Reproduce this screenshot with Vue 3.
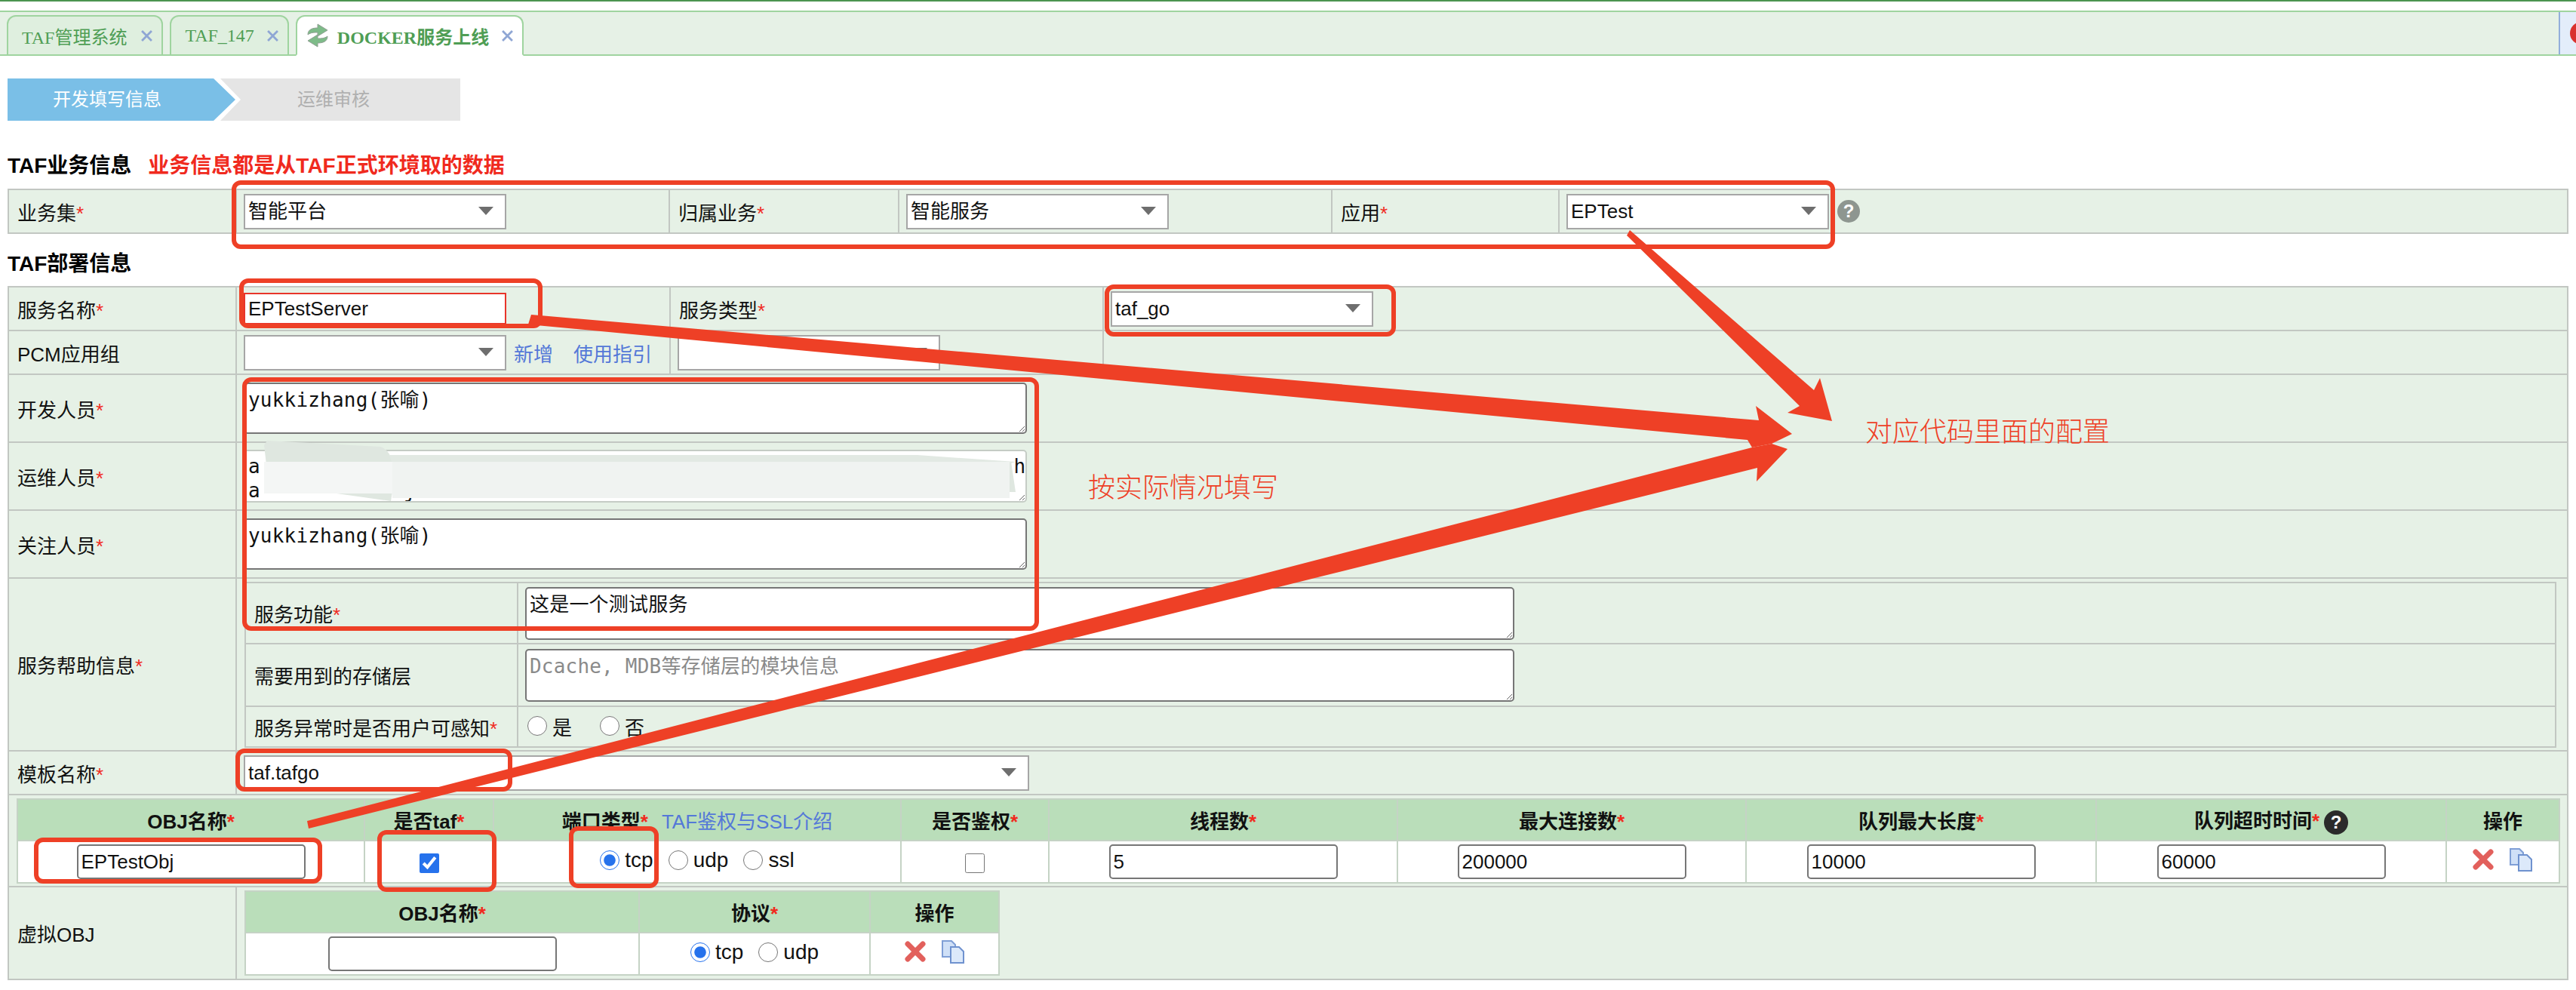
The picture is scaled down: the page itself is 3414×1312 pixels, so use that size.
<template>
  <div class="page">
    <div class="top-line"></div>

    <div class="tab-bar">
      <div v-for="tab in tabs" :key="tab.name" class="tab" :class="{ active: tab.active }">
        <svg v-if="tab.active" class="tab-icon" viewBox="0 0 30 32">
          <path d="M2 15C2 8 8 6 15 6V1l13 8-13 8v-5c-5 0-9 0-13 3z" fill="#7dbb88" stroke="#909f93" stroke-width="1" />
          <path d="M28 17c0 7-6 9-13 9v5L2 23l13-8v5c5 0 9 0 13-3z" fill="#7dbb88" stroke="#909f93" stroke-width="1" />
        </svg>
        <span class="tab-name">{{ tab.name }}</span>
        <svg class="tab-close" viewBox="0 0 14 14">
          <path d="M1 1l12 12M13 1L1 13" stroke="#8fa6d4" stroke-width="2.6" fill="none" />
        </svg>
      </div>
      <div class="tab-tools"><span class="tool-dot"></span></div>
    </div>

    <div class="steps">
      <div class="step step-on">开发填写信息</div>
      <div class="step step-off">运维审核</div>
    </div>

    <h3 class="section-title first">TAF业务信息<span class="section-note">业务信息都是从TAF正式环境取的数据</span></h3>
    <table class="form-table biz-table">
      <colgroup>
        <col style="width: 302px" />
        <col style="width: 574px" />
        <col style="width: 304px" />
        <col style="width: 574px" />
        <col style="width: 301px" />
        <col />
      </colgroup>
      <tr>
        <td class="label">业务集<i>*</i></td>
        <td><div class="select">智能平台</div></td>
        <td class="label">归属业务<i>*</i></td>
        <td><div class="select">智能服务</div></td>
        <td class="label">应用<i>*</i></td>
        <td class="app-cell">
          <div class="select">EPTest</div>
          <span class="hint gray">?</span>
        </td>
      </tr>
    </table>

    <h3 class="section-title">TAF部署信息</h3>
    <table class="form-table deploy-table">
      <colgroup>
        <col style="width: 302px" />
        <col style="width: 575px" />
        <col style="width: 574px" />
        <col />
      </colgroup>
      <tr class="row-58">
        <td class="label">服务名称<i>*</i></td>
        <td><input class="text-input server-name" value="EPTestServer" /></td>
        <td class="label">服务类型<i>*</i></td>
        <td><div class="select">taf_go</div></td>
      </tr>
      <tr class="row-58">
        <td class="label">PCM应用组</td>
        <td class="pcm-cell">
          <div class="select"></div>
          <a class="link">新增</a>
          <a class="link">使用指引</a>
        </td>
        <td><div class="select"></div></td>
        <td></td>
      </tr>
      <tr class="row-90">
        <td class="label">开发人员<i>*</i></td>
        <td colspan="3"><textarea class="area wide" :value="people"></textarea></td>
      </tr>
      <tr class="row-90">
        <td class="label">运维人员<i>*</i></td>
        <td colspan="3"><textarea class="area wide masked" :value="opsPeople"></textarea></td>
      </tr>
      <tr class="row-90">
        <td class="label">关注人员<i>*</i></td>
        <td colspan="3"><textarea class="area wide" :value="people"></textarea></td>
      </tr>
      <tr>
        <td class="label">服务帮助信息<i>*</i></td>
        <td colspan="3" class="nested-cell">
          <table class="form-table help-table">
            <colgroup>
              <col style="width: 361px" />
              <col />
            </colgroup>
            <tr class="row-81">
              <td class="label">服务功能<i>*</i></td>
              <td><textarea class="area help-area" value="这是一个测试服务"></textarea></td>
            </tr>
            <tr class="row-83">
              <td class="label">需要用到的存储层</td>
              <td><textarea class="area help-area" placeholder="Dcache, MDB等存储层的模块信息"></textarea></td>
            </tr>
            <tr class="row-54">
              <td class="label">服务异常时是否用户可感知<i>*</i></td>
              <td class="radios">
                <label><input type="radio" name="aware" />是</label>
                <label><input type="radio" name="aware" />否</label>
              </td>
            </tr>
          </table>
        </td>
      </tr>
      <tr class="row-58">
        <td class="label">模板名称<i>*</i></td>
        <td colspan="3"><div class="select template">taf.tafgo</div></td>
      </tr>
      <tr>
        <td colspan="4" class="obj-cell">
          <table class="grid-table obj-table">
            <colgroup>
              <col v-for="col in objCols" :key="col.title" :style="{ width: col.width + 'px' }" />
            </colgroup>
            <tr class="grid-head">
              <th>OBJ名称<i>*</i></th>
              <th>是否taf<i>*</i></th>
              <th>端口类型<i>*</i><a class="link intro">TAF鉴权与SSL介绍</a></th>
              <th>是否鉴权<i>*</i></th>
              <th>线程数<i>*</i></th>
              <th>最大连接数<i>*</i></th>
              <th>队列最大长度<i>*</i></th>
              <th>队列超时时间<i>*</i><span class="hint dark">?</span></th>
              <th>操作</th>
            </tr>
            <tr class="grid-body">
              <td><input class="text-input small" value="EPTestObj" /></td>
              <td><input type="checkbox" class="check" checked /></td>
              <td class="proto">
                <label><input type="radio" name="proto" checked />tcp</label>
                <label><input type="radio" name="proto" />udp</label>
                <label><input type="radio" name="proto" />ssl</label>
              </td>
              <td><input type="checkbox" class="check" /></td>
              <td><input class="text-input small" value="5" /></td>
              <td><input class="text-input small" value="200000" /></td>
              <td><input class="text-input small" value="10000" /></td>
              <td><input class="text-input small" value="60000" /></td>
              <td class="ops">
                <svg class="op-del" viewBox="0 0 28 28"><path d="M4 4l20 20M24 4L4 24" stroke="#e2605c" stroke-width="7" stroke-linecap="round" /></svg>
                <svg class="op-copy" viewBox="0 0 32 32">
                  <path d="M2 2h12l5 5v16H2z" fill="#cfe0f7" stroke="#7f9fd6" stroke-width="2" />
                  <path d="M13 10h11l6 6v15H13z" fill="#dce9fa" stroke="#6f92cf" stroke-width="2" />
                </svg>
              </td>
            </tr>
          </table>
        </td>
      </tr>
      <tr>
        <td class="label">虚拟OBJ</td>
        <td colspan="3" class="virtual-cell">
          <table class="grid-table virtual-table">
            <colgroup>
              <col style="width: 522px" />
              <col style="width: 306px" />
              <col style="width: 171px" />
            </colgroup>
            <tr class="grid-head">
              <th>OBJ名称<i>*</i></th>
              <th>协议<i>*</i></th>
              <th>操作</th>
            </tr>
            <tr class="grid-body">
              <td><input class="text-input small" /></td>
              <td class="proto">
                <label><input type="radio" name="vproto" checked />tcp</label>
                <label><input type="radio" name="vproto" />udp</label>
              </td>
              <td class="ops">
                <svg class="op-del" viewBox="0 0 28 28"><path d="M4 4l20 20M24 4L4 24" stroke="#e2605c" stroke-width="7" stroke-linecap="round" /></svg>
                <svg class="op-copy" viewBox="0 0 32 32">
                  <path d="M2 2h12l5 5v16H2z" fill="#cfe0f7" stroke="#7f9fd6" stroke-width="2" />
                  <path d="M13 10h11l6 6v15H13z" fill="#dce9fa" stroke="#6f92cf" stroke-width="2" />
                </svg>
              </td>
            </tr>
          </table>
        </td>
      </tr>
    </table>

    <!-- annotations drawn on top of the screenshot -->
    <svg class="marks" viewBox="0 0 3414 1312">
      <path d="M350 590l4-6 150 8q12 4 16 20h820l6 40H520l-2 12-100-14-62-8z" fill="#dfe7e0" />
      <path d="M516 603h700l130 9-6 2H520z" fill="#e2e9e3" />
      <path d="M520 612h818v48H520z" fill="#f0f3f1" />
      <path d="M350 612h170v42H350z" fill="#f4f6f5" />

      <polygon points="2160,305 2404,517 2412,501 2428,558 2369,547 2385,538 2156,312" class="arrow" />
      <polygon points="704,417 2331,557 2327,538 2375,575 2348,588 2322,593 2316,583 700,430" class="arrow" />
      <polygon points="407,1088 2322,593 2348,588 2369,595 2328,638 2329,620 409,1098" class="arrow" />

      <rect v-for="box in boxes" :key="box.x" :x="box.x" :y="box.y" :width="box.w" :height="box.h" rx="9" class="box" />
    </svg>
    <div class="note note-fill">按实际情况填写</div>
    <div class="note note-code">对应代码里面的配置</div>
  </div>
</template>

<script setup>
const tabs = [
  { name: 'TAF管理系统' },
  { name: 'TAF_147' },
  { name: 'DOCKER服务上线', active: true }
]

const people = 'yukkizhang(张喻)'
const opsPeople = 'a' + ' '.repeat(63) + 'h\na' + ' '.repeat(11) + '_j'

const objCols = [
  { title: 'obj', width: 460 },
  { title: 'taf', width: 171 },
  { title: 'port', width: 540 },
  { title: 'auth', width: 196 },
  { title: 'thread', width: 462 },
  { title: 'conn', width: 462 },
  { title: 'queue', width: 464 },
  { title: 'timeout', width: 464 },
  { title: 'ops', width: 150 }
]

// red marker boxes
const boxes = [
  { x: 310, y: 242, w: 2119, h: 85 },
  { x: 320, y: 372, w: 396, h: 60 },
  { x: 1467, y: 380, w: 380, h: 63 },
  { x: 324, y: 503, w: 1050, h: 330 },
  { x: 315, y: 995, w: 361, h: 51 },
  { x: 48, y: 1113, w: 376, h: 55 },
  { x: 503, y: 1103, w: 152, h: 76 },
  { x: 757, y: 1098, w: 113, h: 76 }
]
</script>

<style>
html,
body {
  margin: 0;
  background: #fff;
}
</style>

<style scoped>
.page {
  position: relative;
  width: 3414px;
  height: 1312px;
  overflow: hidden;
  background: #fff;
  color: #111;
  font-family: "Liberation Sans", "Noto Sans CJK SC", sans-serif;
  font-size: 26px;
}

.top-line {
  height: 2px;
  margin-bottom: 12px;
  background: #4b9450;
}

.tab-bar {
  display: flex;
  align-items: flex-end;
  gap: 9px;
  box-sizing: border-box;
  height: 60px;
  padding-left: 9px;
  border-top: 2px solid #9fd49f;
  border-bottom: 2px solid #9fd49f;
  background: #e6f1e6;
}
.tab {
  display: flex;
  align-items: center;
  box-sizing: border-box;
  height: 54px;
  margin-bottom: -2px;
  padding: 0 12px 0 18px;
  border: 2px solid #9fd49f;
  border-radius: 12px 12px 0 0;
  background: #dfefdf;
  color: #4f9e55;
  font-family: "Liberation Serif", "Noto Sans CJK SC", serif;
  font-size: 24px;
}
.tab.active {
  padding: 0 12px 0 12px;
  border-bottom-color: #fff;
  background: #fff;
}
.tab.active .tab-name {
  font-weight: 700;
}
.tab-icon {
  width: 30px;
  height: 32px;
  margin-right: 11px;
}
.tab-close {
  width: 15px;
  height: 15px;
  margin-left: 17px;
}
.tab:first-child .tab-close {
  margin-left: 19px;
}
.tab-tools {
  display: flex;
  align-items: center;
  box-sizing: border-box;
  width: 23px;
  height: 56px;
  margin-left: auto;
  overflow: hidden;
  border-left: 2px solid #93aedb;
  background: #e3edfa;
}
.tool-dot {
  flex: none;
  width: 30px;
  height: 30px;
  margin-left: 13px;
  border-radius: 50%;
  background: #d9322e;
}

.steps {
  display: flex;
  width: 600px;
  height: 56px;
  margin: 30px 0 0 10px;
  font-size: 24px;
  line-height: 56px;
  text-align: center;
}
.step-on {
  width: 302px;
  padding-right: 38px;
  box-sizing: border-box;
  background: #7abfe7;
  color: #fff;
  clip-path: polygon(0 0, 273px 0, 302px 50%, 273px 100%, 0 100%);
}
.step-off {
  flex: 1;
  margin-left: -20px;
  padding-right: 18px;
  background: #e5e5e5;
  color: #b0b0b0;
  clip-path: polygon(0 0, 100% 0, 100% 100%, 0 100%, 27px 50%);
}

.section-title {
  margin: 0;
  padding: 20px 0 9px 10px;
  font-size: 28px;
  line-height: 40px;
  font-weight: 700;
  color: #000;
}
.section-title.first {
  padding-top: 40px;
  padding-bottom: 10px;
}
.section-note {
  margin-left: 22px;
  color: #f02a1e;
}

.form-table {
  border-collapse: collapse;
  table-layout: fixed;
  background: #e6f1e6;
}
.biz-table,
.deploy-table {
  width: 3394px;
  margin-left: 10px;
}
.form-table td {
  padding: 0 0 0 9px;
  border: 2px solid #c2c7c2;
  vertical-align: middle;
}
.biz-table tr {
  height: 58px;
}
.row-58 {
  height: 58px;
}
.row-90 {
  height: 90px;
}
.row-81 {
  height: 81px;
}
.row-83 {
  height: 83px;
}
.row-54 {
  height: 54px;
}
td.label {
  padding-left: 11px;
  white-space: nowrap;
}
i {
  color: #f02a1e;
  font-style: normal;
}

.select {
  position: relative;
  box-sizing: border-box;
  width: 348px;
  height: 47px;
  padding-left: 4px;
  border: 2px solid #a6a6a6;
  background: #fff;
  line-height: 42px;
}
.select::after {
  content: "";
  position: absolute;
  top: 15px;
  right: 15px;
  border-top: 11px solid #6e6e6e;
  border-left: 10px solid transparent;
  border-right: 10px solid transparent;
}
.select.template {
  width: 1041px;
}

.app-cell {
  white-space: nowrap;
}
.app-cell .select {
  display: inline-block;
  vertical-align: middle;
}
.hint {
  display: inline-block;
  border-radius: 50%;
  color: #fff;
  font-weight: 700;
  text-align: center;
  vertical-align: middle;
}
.hint.gray {
  width: 30px;
  height: 30px;
  margin-left: 11px;
  background: #8e9690;
  font-size: 24px;
  line-height: 30px;
}
.hint.dark {
  width: 32px;
  height: 32px;
  margin-left: 6px;
  background: #2b2b2b;
  font-size: 24px;
  line-height: 32px;
}

.text-input {
  box-sizing: border-box;
  width: 348px;
  height: 42px;
  margin: 0;
  padding: 0 4px;
  border: 2px solid #767676;
  border-radius: 5px;
  background: #fff;
  color: #111;
  font: inherit;
  outline: none;
}
.server-name {
  border-color: #e8352a;
  border-radius: 0;
}
.text-input.small {
  display: block;
  width: 303px;
  height: 46px;
  margin: 0 auto;
}

.pcm-cell {
  white-space: nowrap;
}
.pcm-cell .select {
  display: inline-block;
  vertical-align: middle;
}
.link {
  color: #5478d8;
  font-weight: 400;
}
.pcm-cell .link {
  margin-left: 10px;
  vertical-align: middle;
}
.pcm-cell .link + .link {
  margin-left: 27px;
}

.area {
  display: block;
  box-sizing: border-box;
  margin: 0;
  padding: 5px 4px;
  border: 2px solid #767676;
  border-radius: 5px;
  background: #fff;
  color: #111;
  font-family: "DejaVu Sans Mono", "Noto Sans CJK SC", monospace;
  font-size: 26px;
  line-height: 32px;
  letter-spacing: 0.2px;
  outline: none;
}
.area::placeholder {
  color: #8a8a8a;
}
.area.wide {
  width: 1038px;
  height: 68px;
}
.area.masked {
  height: 70px;
  padding-top: 4px;
  border-color: #c5ccc5;
  overflow: hidden;
  white-space: pre;
}
.area.help-area {
  width: 1311px;
  height: 70px;
  overflow: hidden;
}

td.nested-cell {
  padding: 4px 14px 3px 10px;
}
.help-table {
  width: 100%;
}
.help-table td.label {
  padding-left: 11px;
}
.radios label {
  display: inline-flex;
  align-items: center;
  margin-right: 37px;
}
input[type="radio"] {
  width: 26px;
  height: 26px;
  margin: 0 7px 0 0;
  accent-color: #2672ec;
}
.radios label:first-child {
  margin-left: 3px;
}

td.obj-cell {
  padding: 4px 13px 3px 10px;
}
.grid-table {
  border-collapse: collapse;
  table-layout: fixed;
  background: #fff;
}
.obj-table {
  width: 3369px;
}
.virtual-table {
  width: 999px;
}
.form-table td.virtual-cell {
  padding: 4px 0 4px 10px;
}
.grid-table th,
.form-table .grid-table td {
  padding: 0;
  border: 2px solid #c5d3c5;
  text-align: center;
  vertical-align: middle;
}
.grid-head {
  height: 55px;
}
.grid-head th {
  background: #badeba;
  font-weight: 700;
  white-space: nowrap;
}
.grid-body {
  height: 56px;
}
.intro {
  margin-left: 18px;
}
.check {
  width: 26px;
  height: 26px;
  margin: 0;
  vertical-align: middle;
  accent-color: #2672ec;
}
.proto {
  font-size: 28px;
}
.proto label {
  display: inline-flex;
  align-items: center;
  margin: 0 10px;
}
.ops svg {
  vertical-align: middle;
}
.op-del {
  width: 28px;
  height: 28px;
  margin-bottom: 6px;
}
.op-copy {
  width: 32px;
  height: 32px;
  margin: 0 0 6px 20px;
}

.marks {
  position: absolute;
  top: 0;
  left: 0;
  width: 3414px;
  height: 1312px;
  pointer-events: none;
}
.arrow {
  fill: #ee4026;
}
.box {
  fill: none;
  stroke: #ee4026;
  stroke-width: 6;
}

.note {
  position: absolute;
  color: #ee4026;
  font-family: "Noto Sans CJK SC", sans-serif;
  font-size: 36px;
  font-weight: 300;
  line-height: 40px;
  white-space: nowrap;
}
.note-fill {
  top: 623px;
  left: 1442px;
}
.note-code {
  top: 549px;
  left: 2472px;
}
</style>
